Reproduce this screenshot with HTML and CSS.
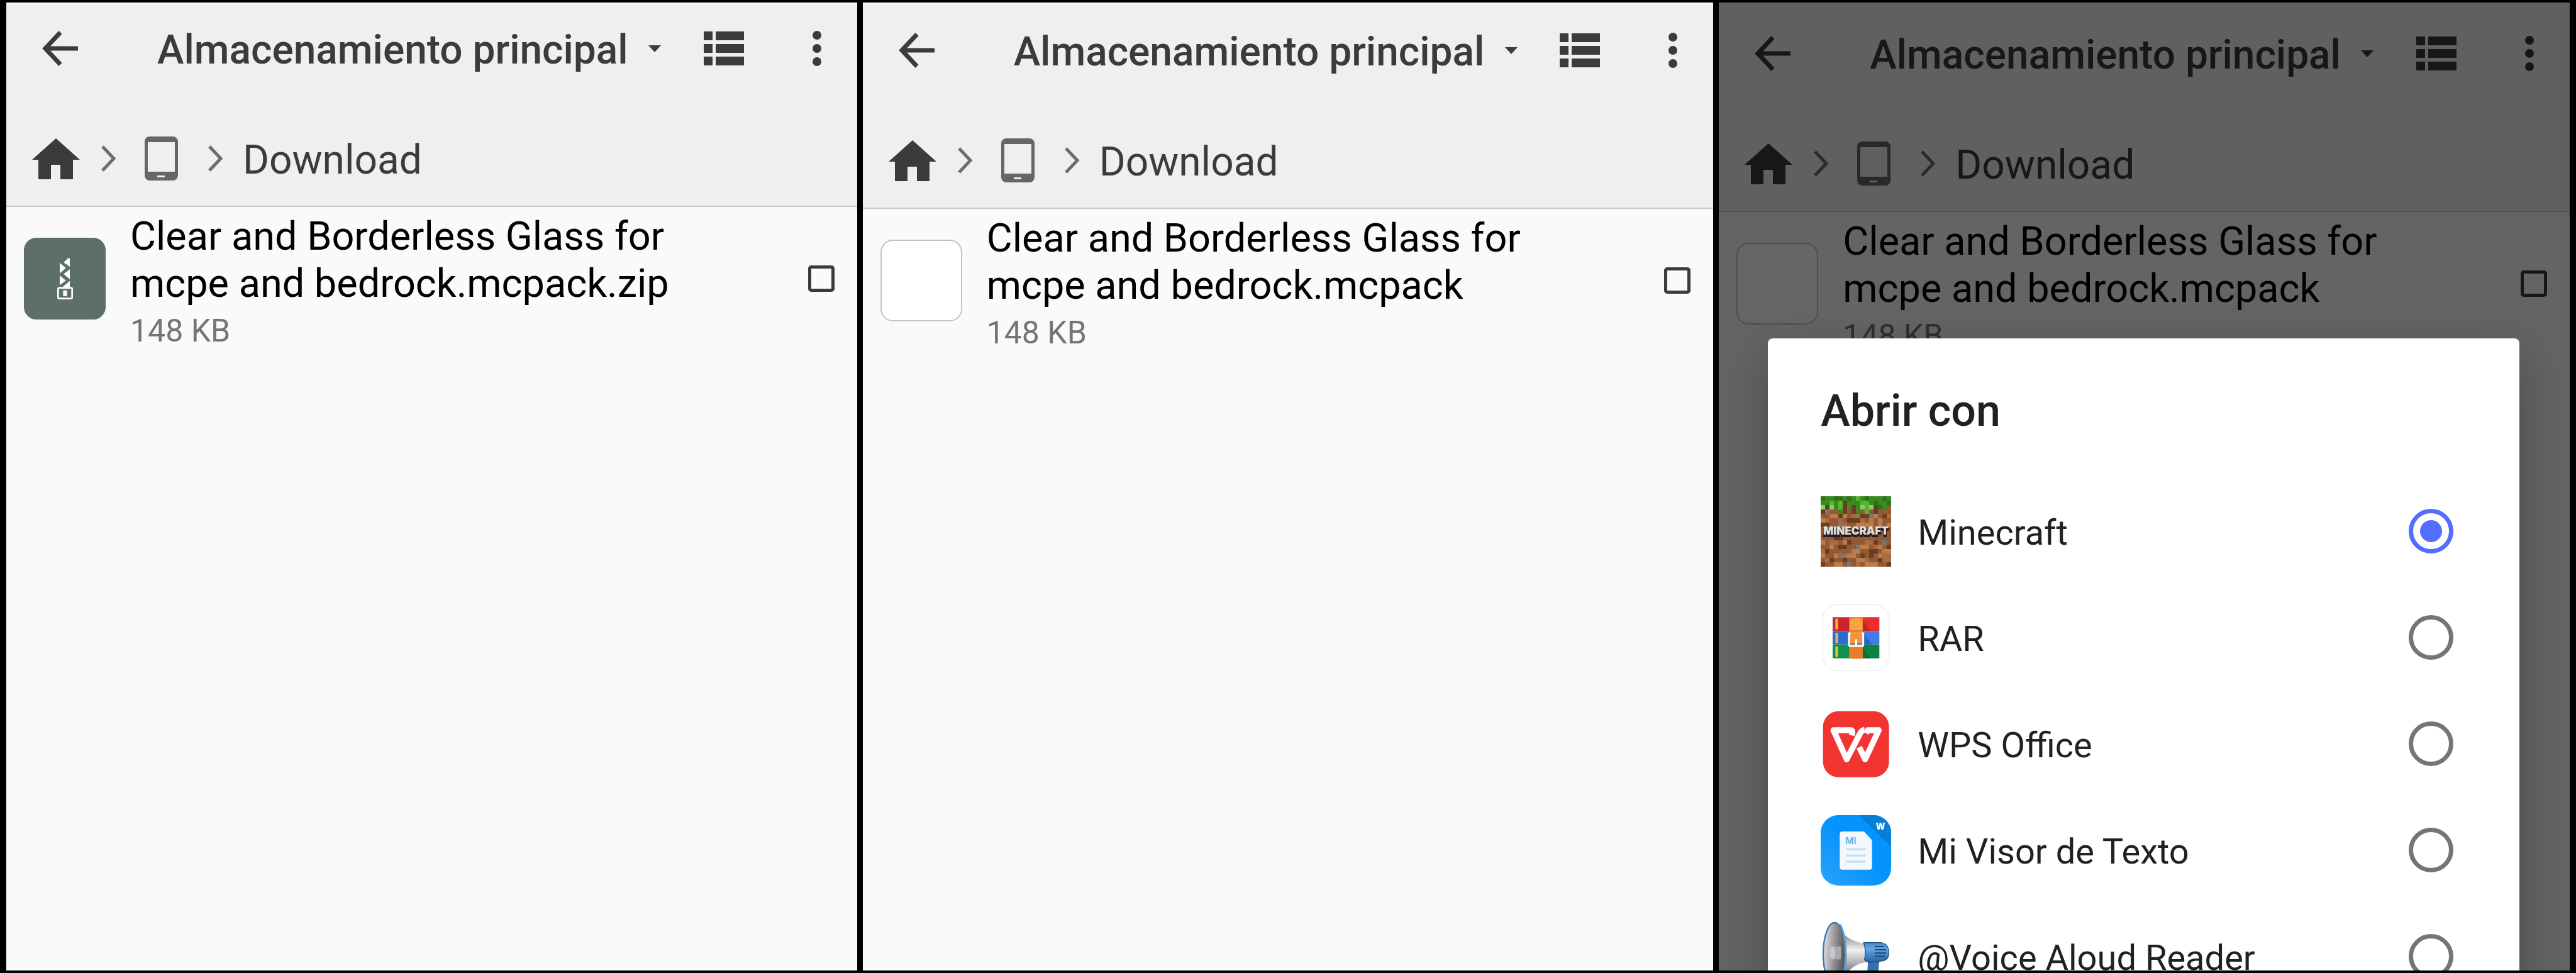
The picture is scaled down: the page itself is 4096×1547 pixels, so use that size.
FILE: index.html
```html
<!DOCTYPE html>
<html lang="es">
<head>
    <meta charset="UTF-8">
    <meta name="viewport" content="width=device-width, initial-scale=1.0">
    <title>Almacenamiento principal</title>
    <link rel="stylesheet" href="styles.css">
</head>
<body>
    <!-- Shared icons -->
    <svg class="sprite" aria-hidden="true">
        <symbol id="i-back" viewBox="0 0 57 56">
            <path d="M29 2.500L5 28l24 25.500M5 28h52" fill="none" stroke="currentColor" stroke-width="7"/>
        </symbol>
        <symbol id="i-caret" viewBox="0 0 20 11">
            <path d="M0 0h20L10 11z" fill="currentColor"/>
        </symbol>
        <symbol id="i-list" viewBox="0 0 64 54">
            <path d="M0 0h14v14H0zM19 0h45v14H19zM0 20h14v14H0zM19 20h45v14H19zM0 40h14v14H0zM19 40h45v14H19z" fill="currentColor"/>
        </symbol>
        <symbol id="i-more" viewBox="0 0 14 56">
            <g fill="currentColor"><circle cx="7" cy="7" r="7"/><circle cx="7" cy="28" r="7"/><circle cx="7" cy="49" r="7"/></g>
        </symbol>
        <symbol id="i-home" viewBox="0 0 76 65">
            <path d="M38 0l38 34H65v31H45V42H30v23H10V34H0z" fill="currentColor"/>
        </symbol>
        <symbol id="i-chevron" viewBox="0 0 24 42">
            <path d="M2 2l18 19L2 40" fill="none" stroke="currentColor" stroke-width="5"/>
        </symbol>
        <symbol id="i-phone" viewBox="0 0 53 70">
            <path fill="currentColor" fill-rule="evenodd" d="M8 0h37a8 8 0 0 1 8 8v54a8 8 0 0 1-8 8H8a8 8 0 0 1-8-8V8a8 8 0 0 1 8-8zM5 9v47h43V9zM20 62v3h12v-3z"/>
        </symbol>
    </svg>

    <main class="screens">
        <section class="screen">
            <header class="header">
                <div class="toolbar">
                    <button class="icon-btn" aria-label="Atrás"><svg width="57" height="56"><use href="#i-back"/></svg></button>
                    <div class="storage">
                        <select class="bar-text" aria-label="Almacenamiento"><option>Almacenamiento principal</option></select>
                        <svg width="20" height="11"><use href="#i-caret"/></svg>
                    </div>
                    <button class="icon-btn" aria-label="Vista"><svg width="64" height="54"><use href="#i-list"/></svg></button>
                    <button class="icon-btn" aria-label="Más"><svg width="14" height="56"><use href="#i-more"/></svg></button>
                </div>
                <nav class="crumbs">
                    <a href="#" aria-label="Inicio"><svg width="76" height="65"><use href="#i-home"/></svg></a>
                    <svg class="sep" width="24" height="42"><use href="#i-chevron"/></svg>
                    <a class="device" href="#" aria-label="Dispositivo"><svg width="53" height="70"><use href="#i-phone"/></svg></a>
                    <svg class="sep" width="24" height="42"><use href="#i-chevron"/></svg>
                    <a class="bar-text" href="#">Download</a>
                </nav>
            </header>
            <div class="file">
                <div class="thumb zip">
                    <svg width="25" height="66" viewBox="0 0 75 198">
                        <path fill="#fff" d="M60 2v40L31 22 50 3q10-4 10-1zM12 24l29 24-29 26zM60 54v48L31 77zM12 84l29 24-29 22zM60 110v30H24z"/>
                        <rect x="4" y="143" width="67" height="51" rx="5" fill="none" stroke="#fff" stroke-width="8"/>
                        <rect x="28" y="155" width="19" height="27" rx="3" fill="#fff"/>
                    </svg>
                </div>
                <label class="file-text" for="file1">
                    <span class="file-name">Clear and Borderless Glass for mcpe and bedrock.mcpack.zip</span>
                    <span class="file-size">148 KB</span>
                </label>
                <input type="checkbox" id="file1">
            </div>
        </section>

        <section class="screen second">
            <header class="header">
                <div class="toolbar">
                    <button class="icon-btn" aria-label="Atrás"><svg width="57" height="56"><use href="#i-back"/></svg></button>
                    <div class="storage">
                        <select class="bar-text" aria-label="Almacenamiento"><option>Almacenamiento principal</option></select>
                        <svg width="20" height="11"><use href="#i-caret"/></svg>
                    </div>
                    <button class="icon-btn" aria-label="Vista"><svg width="64" height="54"><use href="#i-list"/></svg></button>
                    <button class="icon-btn" aria-label="Más"><svg width="14" height="56"><use href="#i-more"/></svg></button>
                </div>
                <nav class="crumbs">
                    <a href="#" aria-label="Inicio"><svg width="76" height="65"><use href="#i-home"/></svg></a>
                    <svg class="sep" width="24" height="42"><use href="#i-chevron"/></svg>
                    <a class="device" href="#" aria-label="Dispositivo"><svg width="53" height="70"><use href="#i-phone"/></svg></a>
                    <svg class="sep" width="24" height="42"><use href="#i-chevron"/></svg>
                    <a class="bar-text" href="#">Download</a>
                </nav>
            </header>
            <div class="file">
                <div class="thumb"></div>
                <label class="file-text" for="file2">
                    <span class="file-name">Clear and Borderless Glass for mcpe and bedrock.mcpack</span>
                    <span class="file-size">148 KB</span>
                </label>
                <input type="checkbox" id="file2">
            </div>
        </section>

        <section class="screen third">
            <header class="header">
                <div class="toolbar">
                    <button class="icon-btn" aria-label="Atrás"><svg width="57" height="56"><use href="#i-back"/></svg></button>
                    <div class="storage">
                        <select class="bar-text" aria-label="Almacenamiento"><option>Almacenamiento principal</option></select>
                        <svg width="20" height="11"><use href="#i-caret"/></svg>
                    </div>
                    <button class="icon-btn" aria-label="Vista"><svg width="64" height="54"><use href="#i-list"/></svg></button>
                    <button class="icon-btn" aria-label="Más"><svg width="14" height="56"><use href="#i-more"/></svg></button>
                </div>
                <nav class="crumbs">
                    <a href="#" aria-label="Inicio"><svg width="76" height="65"><use href="#i-home"/></svg></a>
                    <svg class="sep" width="24" height="42"><use href="#i-chevron"/></svg>
                    <a class="device" href="#" aria-label="Dispositivo"><svg width="53" height="70"><use href="#i-phone"/></svg></a>
                    <svg class="sep" width="24" height="42"><use href="#i-chevron"/></svg>
                    <a class="bar-text" href="#">Download</a>
                </nav>
            </header>
            <div class="file">
                <div class="thumb"></div>
                <label class="file-text" for="file3">
                    <span class="file-name">Clear and Borderless Glass for mcpe and bedrock.mcpack</span>
                    <span class="file-size">148 KB</span>
                </label>
                <input type="checkbox" id="file3">
            </div>

            <div class="scrim"></div>
            <div class="dialog" role="dialog" aria-labelledby="dialog-title">
                <h2 id="dialog-title">Abrir con</h2>
                <div class="apps">
                    <label class="app">
                        <svg width="112" height="112" viewBox="0 0 112 112">
                            <g transform="scale(7)" shape-rendering="crispEdges">
                                <path fill="#925a34" d="M0 0h16v16H0z"/>
                                <path fill="#683e23" d="M5 1h1v3H5zM7 2h1v2H7zM1 2h1v1H1zM12 2h1v2h-1zM0 3h1v1H0zM6 5h3v1H6zM9 4h2v1H9zM0 6h2v1H0zM4 4h1v1H4zM14 4h1v1h-1zM11 6h1v1h-1zM3 9h2v1H3zM6 10h1v1H6zM12 10h1v1h-1zM1 12h1v1H1zM4 11h2v1H4zM9 13h1v1H9zM11 12h2v1h-2zM0 15h1v1H0zM2 14h1v1H2zM5 14h1v1H5zM13 14h1v1h-1zM15 15h1v1h-1zM8 11h1v1H8zM15 11h1v1h-1zM11 13h1v1h-1z"/>
                                <path fill="#bd7b4a" d="M2 4h2v1H2zM0 5h1v1H0zM5 4h1v1H5zM8 6h4v1H8zM13 5h1v2h-1zM11 5h1v1h-1zM0 10h1v1H0zM2 11h1v1H2zM5 10h1v1H5zM9 11h2v1H9zM13 11h1v1h-1zM0 13h1v1H0zM3 13h1v1H3zM8 14h2v1H8zM14 12h2v1h-2zM6 13h2v1H6zM10 15h3v1h-3zM3 15h2v1H3zM13 13h1v1h-1zM7 12h2v1H7zM12 4h1v1h-1zM15 6h1v1h-1z"/>
                                <path fill="#a96b40" d="M1 5h1v1H1zM4 5h1v1H4zM7 4h2v1H7zM9 5h1v1H9zM15 4h1v1h-1zM2 10h2v1H2zM10 10h2v1h-2zM0 12h1v1H0zM1 14h1v1H1zM6 15h1v1H6zM14 13h2v2h-2zM10 14h1v1h-1zM5 13h1v1H5zM12 11h1v1h-1zM8 15h1v1H8zM4 6h2v1H4z"/>
                                <path fill="#7c7473" d="M1 3h1v1H1zM11 4h1v1h-1zM4 6h1v1H4zM8 11h1v1H8zM14 10h1v1h-1zM4 13h1v1H4zM6 15h1v1H6z"/>
                                <path fill="#3b8a20" d="M0 0h16v1H0zM0 1h5v1H0zM6 1h10v1H6zM0 2h1v1H0zM2 2h3v1H2zM6 2h1v1H6zM8 2h4v1H8zM13 2h2v1h-2zM4 3h1v1H4zM8 3h1v1H8zM10 3h1v1h-1z"/>
                                <path fill="#2c7217" d="M0 0h1v1H0zM3 0h2v1H3zM6 0h1v1H6zM10 0h1v1h-1zM14 0h1v1h-1zM12 1h1v1h-1zM15 1h1v1h-1zM13 2h1v1h-1z"/>
                                <path fill="#55b52d" d="M2 1h1v2H2zM8 0h1v1H8zM9 1h2v2H9zM4 1h1v1H4zM10 3h1v1h-1zM4 2h1v1H4zM0 2h1v1H0z"/>
                                <path fill="#86cf61" d="M2 2h1v1H2zM9 2h1v1H9zM11 2h1v1h-1zM0 2h1v1H0z"/>
                            </g>
                            <g font-family="Inter, sans-serif" font-weight="900" font-size="17" text-anchor="middle" stroke-linejoin="round">
                                <text x="56" y="64" fill="#211b19" stroke="#211b19" stroke-width="2">MINECRAFT</text>
                                <text x="56" y="61" fill="#e2e0df">MINECRAFT</text>
                            </g>
                        </svg>
                        <span>Minecraft</span>
                        <input type="radio" name="app" checked>
                    </label>
                    <label class="app">
                        <svg width="112" height="112" viewBox="0 0 336 336">
                            <rect x="10" y="9" width="317" height="317" rx="72" fill="#fff" stroke="#e4e4e4" stroke-width="3"/>
                            <path fill="#c9242f" d="M57 70h80v66H57z"/><path fill="#ea2d2f" d="M137 70h143v66H137z"/>
                            <path fill="#2f69cf" d="M57 136h80v64H57z"/><path fill="#3f7cea" d="M137 136h143v64H137z"/>
                            <path fill="#119150" d="M57 200h80v66H57z"/><path fill="#0b8442" d="M137 200h143v66H137z"/>
                            <path fill="#8d1c20" opacity=".5" d="M200 82l36 54h-36z"/>
                            <path fill="#123f8d" opacity=".4" d="M204 148l40 52h-40z"/>
                            <path fill="#064f27" opacity=".4" d="M200 214l38 52h-38z"/>
                            <path fill="#efb13c" d="M70 77h13v51H70z"/><path fill="#d7b55a" d="M70 144h13v50H70z"/><path fill="#d3ca3c" d="M70 209h13v50H70z"/>
                            <path fill="#f28a32" d="M137 70h64v66h-64z"/><path fill="#fba342" d="M141 136V96q0-20 28-20t28 20v40z"/>
                            <path fill="#e77d2c" d="M137 200h64v68h-64z"/><path fill="#f5953f" d="M137 136h64v58h-64z"/>
                            <path stroke="#a95d22" stroke-width="3" d="M137 135h64"/>
                            <path d="M142 147h-7v53q0 8 8 8h52q8 0 8-8v-53h-7" fill="none" stroke="#fff" stroke-width="9"/>
                            <path d="M169 180v24" stroke="#fff" stroke-width="10" stroke-linecap="round"/>
                        </svg>
                        <span>RAR</span>
                        <input type="radio" name="app">
                    </label>
                    <label class="app">
                        <svg width="112" height="112" viewBox="0 0 336 336">
                            <rect x="11" y="11" width="315" height="315" rx="74" fill="#f23431"/>
                            <g fill="none" stroke-linejoin="round">
                                <path d="M216 116l9-14h52l-65 139-28-58" stroke="#fff" stroke-width="28"/>
                                <path d="M149 127q6-25-5-25H61l63 139 65-125q8-15 20-16" stroke="#f23431" stroke-width="38"/>
                                <path d="M149 127q6-25-5-25H61l63 139 65-125q8-15 20-16" stroke="#fff" stroke-width="28"/>
                            </g>
                        </svg>
                        <span>WPS Office</span>
                        <input type="radio" name="app">
                    </label>
                    <label class="app">
                        <svg width="112" height="112" viewBox="0 0 336 336">
                            <defs>
                                <linearGradient id="mi-bg" x1="0" y1="1" x2=".5" y2=".5"><stop offset="0" stop-color="#2aa2fb"/><stop offset="1" stop-color="#0593fd"/></linearGradient>
                                <clipPath id="mi-clip"><rect width="336" height="336" rx="84"/></clipPath>
                            </defs>
                            <g clip-path="url(#mi-clip)">
                                <path fill="url(#mi-bg)" d="M0 0h336v336H0z"/>
                                <path fill="#077fd6" d="M182 0h154v152z"/>
                            </g>
                            <path fill="#f2f8fe" d="M103 78h98q5 0 9 4l32 34q3 4 3 8v124q0 12-12 12H103q-12 0-12-12V90q0-12 12-12z"/>
                            <path stroke="#c3dcef" stroke-width="9" stroke-linecap="round" d="M124 163h88M124 193h88M124 222h88"/>
                            <text x="118" y="138" fill="#58aee0" font-family="Inter, sans-serif" font-weight="600" font-size="43">MI</text>
                            <text x="285" y="68" fill="#fff" text-anchor="middle" font-family="Inter, sans-serif" font-weight="800" font-size="42">W</text>
                        </svg>
                        <span>Mi Visor de Texto</span>
                        <input type="radio" name="app">
                    </label>
                    <label class="app">
                        <svg width="112" height="112" viewBox="0 0 336 336">
                            <defs>
                                <linearGradient id="horn" x1="0" y1="0" x2="0" y2="1"><stop offset="0" stop-color="#77777c"/><stop offset=".4" stop-color="#f1f1f2"/><stop offset=".65" stop-color="#b9b9bd"/><stop offset="1" stop-color="#58585e"/></linearGradient>
                                <linearGradient id="bell" x1="0" y1=".3" x2="1" y2=".5"><stop offset="0" stop-color="#e4e4e7"/><stop offset=".5" stop-color="#929297"/><stop offset="1" stop-color="#4c4c54"/></linearGradient>
                                <linearGradient id="body" x1="0" y1="0" x2="0" y2="1"><stop offset="0" stop-color="#3f83c4"/><stop offset=".3" stop-color="#62a8e6"/><stop offset="1" stop-color="#235f9b"/></linearGradient>
                            </defs>
                            <path fill="url(#horn)" d="M100 50q50 54 122 54v92q-60-4-112 70z"/>
                            <path fill="#3473ae" d="M226 190h54l-8 80h-52z"/>
                            <path fill="url(#body)" stroke="#20507f" stroke-width="4" d="M205 101h84q36 8 36 50 0 28-23 36l-68 10q-18-6-25-14 10-38-4-82z"/>
                            <path stroke="#1d4673" stroke-width="6" stroke-linecap="round" d="M260 120h40M260 135h50M260 151h50M260 166h44"/>
                            <ellipse cx="66" cy="156" rx="54" ry="150" fill="url(#bell)" stroke="#3a78b4" stroke-width="7"/>
                            <path fill="#aaaab0" d="M58 119h38v62H58z"/>
                            <ellipse cx="56" cy="150" rx="13" ry="31" fill="#c9c9cd"/>
                            <path d="M92 14q26 40 26 142 0 80-18 130" fill="none" stroke="#5a9bd6" stroke-width="8"/>
                        </svg>
                        <span>@Voice Aloud Reader</span>
                        <input type="radio" name="app">
                    </label>
                </div>
            </div>
        </section>
    </main>
</body>
</html>
```
FILE: styles.css
```css
* {
    box-sizing: border-box;
}
body {
    margin: 0;
    background: #000;
    color: #000;
    font-family: Roboto, sans-serif;
}
svg {
    display: block;
    flex: none;
}
.sprite {
    position: absolute;
    width: 0;
    height: 0;
}
.screens {
    display: grid;
    grid-template-columns: repeat(3, 1fr);
    gap: 9px;
    height: 100vh;
    padding: 4px 10px;
}
.screen {
    position: relative;
    overflow: hidden;
    background: #fafafa;
}

/* Header */
.header {
    display: flex;
    flex-direction: column;
    gap: 108px;
    padding: 39px 0 40px;
    background: #efefef;
    border-top: 2px solid #fafafa;
    border-bottom: 2px solid #c8c8c8;
    color: #3b3b3b;
}
.second .header {
    padding-top: 42px;
}
.third .header {
    padding-top: 47px;
}
.toolbar {
    display: flex;
    align-items: center;
    height: 64px;
    padding: 0 57px;
}
.icon-btn {
    padding: 0;
    border: none;
    background: none;
    color: inherit;
    cursor: pointer;
}
.icon-btn + .icon-btn {
    margin-left: 109px;
}
.storage {
    display: flex;
    align-items: center;
    gap: 32px;
    margin: 0 auto 0 126px;
}
.storage select {
    margin: 0;
    padding-left: 0;
    padding-right: 0;
    padding-bottom: 0;
    border: none;
    background: none;
    appearance: none;
    font-family: inherit;
    font-weight: 500;
}
.bar-text {
    padding-top: 6px;
    color: inherit;
    font-size: 64px;
    line-height: 76px;
}
.crumbs {
    display: flex;
    align-items: center;
    height: 70px;
    padding-left: 41px;
}
.crumbs a {
    color: inherit;
    text-decoration: none;
}
.crumbs .device {
    padding: 0 14px;
    color: #666;
}
.sep {
    margin: 0 31px 0 34px;
    color: #6c6c6c;
}

/* File row */
.file {
    display: flex;
    align-items: center;
    padding: 0 36px 0 28px;
}
.thumb {
    display: flex;
    align-items: center;
    justify-content: center;
    flex: none;
    width: 130px;
    height: 130px;
    border: 2px solid #c4c4c4;
    border-radius: 20px;
    background: #fff;
}
.thumb.zip {
    border-color: #5c7069;
    background: #5c7069;
}
.file-text {
    flex: 1;
    padding: 9px 160px 0 39px;
}
.file-name,
.file-size {
    display: block;
}
.file-name {
    font-size: 63px;
    line-height: 75px;
}
.file-size {
    margin-top: 8px;
    color: #757575;
    font-size: 50px;
    line-height: 60px;
}
.file input {
    flex: none;
    width: 42px;
    height: 42px;
    margin: 0;
    border: 5px solid #3b3b3b;
    border-radius: 5px;
    appearance: none;
}

/* Dialog */
.scrim {
    position: absolute;
    inset: 0;
    background: rgba(0, 0, 0, 0.6);
}
.dialog {
    position: absolute;
    top: 534px;
    left: 78px;
    right: 80px;
    padding: 73px 105px 0 84px;
    border-radius: 8px;
    background: #fff;
    box-shadow: 0 30px 80px rgba(0, 0, 0, 0.25);
    color: #212121;
}
.dialog h2 {
    margin: 0 0 65px;
    font-size: 70px;
    font-weight: 500;
    line-height: 84px;
}
.app {
    display: flex;
    align-items: center;
    gap: 42px;
    height: 169px;
    font-size: 56px;
}
.app span {
    flex: 1;
    padding-top: 4px;
}
.app input {
    width: 71px;
    height: 71px;
    margin: 0;
    padding: 11px;
    border: 7px solid #757575;
    border-radius: 50%;
    appearance: none;
}
.app input:checked {
    border-color: #536dfe;
    background: #536dfe content-box;
}
```
